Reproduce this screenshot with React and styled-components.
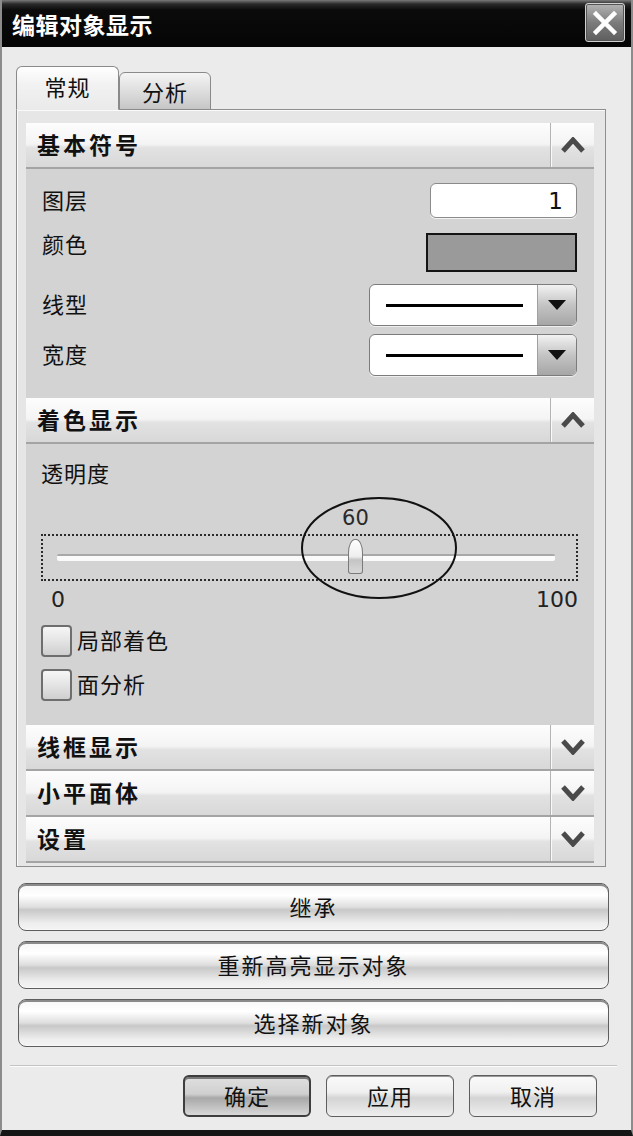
import React from 'react'
import styled, { createGlobalStyle } from 'styled-components'

const GlobalStyle = createGlobalStyle`
  html, body {
    margin: 0;
    padding: 0;
    background: #ebebeb;
  }
  body {
    font-family: "Noto Sans CJK SC", "DejaVu Sans", sans-serif;
    color: #111;
  }
`

const cjk = `"Noto Sans CJK SC", "DejaVu Sans", sans-serif`
const latin = `"DejaVu Sans", "Noto Sans CJK SC", sans-serif`

const ChevronUp = () => (
  <svg width="26" height="16" viewBox="0 0 26 16">
    <polyline points="3,14 13,3 23,14" fill="none" stroke="#4a4a4a" strokeWidth="5" strokeLinejoin="miter" />
  </svg>
)

const ChevronDown = () => (
  <svg width="26" height="16" viewBox="0 0 26 16">
    <polyline points="3,2 13,13 23,2" fill="none" stroke="#4a4a4a" strokeWidth="5" strokeLinejoin="miter" />
  </svg>
)

const DropTriangle = () => (
  <svg width="20" height="12" viewBox="0 0 20 12">
    <polygon points="1,1 19,1 10,11" fill="#111" />
  </svg>
)

const App = () => {
  const transparency = 60

  return (
    <>
      <GlobalStyle />
      <Window>
        <TitleBar>
          <Title>编辑对象显示</Title>
          <CloseButton aria-label="关闭">
            <svg width="26" height="26" viewBox="0 0 26 26">
              <path d="M4 4 L22 22 M22 4 L4 22" stroke="#fff" strokeWidth="4.5" strokeLinecap="square" />
            </svg>
          </CloseButton>
        </TitleBar>

        <Body>
          <Tabs>
            <Tab $active>常规</Tab>
            <Tab>分析</Tab>
          </Tabs>

          <Panel>
            <SectionHeader>
              <SectionTitle>基本符号</SectionTitle>
              <ArrowCell><ChevronUp /></ArrowCell>
            </SectionHeader>
            <SymbolBody>
              <FieldRow $h={35}>
                <Label>图层</Label>
                <NumberInput>1</NumberInput>
              </FieldRow>
              <FieldRow $h={39} $mt={15}>
                <Label $shift={-8}>颜色</Label>
                <Swatch />
              </FieldRow>
              <FieldRow $h={42} $mt={12}>
                <Label>线型</Label>
                <Dropdown>
                  <DropValue><LineSample /></DropValue>
                  <DropArrow><DropTriangle /></DropArrow>
                </Dropdown>
              </FieldRow>
              <FieldRow $h={42} $mt={8}>
                <Label>宽度</Label>
                <Dropdown>
                  <DropValue><LineSample /></DropValue>
                  <DropArrow><DropTriangle /></DropArrow>
                </Dropdown>
              </FieldRow>
            </SymbolBody>

            <SectionHeader>
              <SectionTitle>着色显示</SectionTitle>
              <ArrowCell><ChevronUp /></ArrowCell>
            </SectionHeader>
            <ShadeBody>
              <Label>透明度</Label>
              <SliderBox>
                <SliderValue style={{ left: `calc(16px + ${transparency / 100} * (100% - 39px))` }}>
                  {transparency}
                </SliderValue>
                <Track />
                <Thumb style={{ left: `calc(16px + ${transparency / 100} * (100% - 39px) - 7px)` }} />
                <Ellipse width="160" height="104" viewBox="0 0 160 104">
                  <ellipse cx="80" cy="52" rx="77" ry="50" fill="none" stroke="#111" strokeWidth="2" />
                </Ellipse>
              </SliderBox>
              <ScaleRow>
                <span>0</span>
                <span>100</span>
              </ScaleRow>
              <CheckRow $mt={14}>
                <CheckBox />
                <CheckLabel>局部着色</CheckLabel>
              </CheckRow>
              <CheckRow $mt={12}>
                <CheckBox />
                <CheckLabel>面分析</CheckLabel>
              </CheckRow>
            </ShadeBody>

            {['线框显示', '小平面体', '设置'].map((name) => (
              <SectionHeader key={name}>
                <SectionTitle>{name}</SectionTitle>
                <ArrowCell><ChevronDown /></ArrowCell>
              </SectionHeader>
            ))}
          </Panel>

          <ActionList>
            <WideButton>继承</WideButton>
            <WideButton>重新高亮显示对象</WideButton>
            <WideButton>选择新对象</WideButton>
          </ActionList>

          <Separator />

          <Footer>
            <FooterButton $default>确定</FooterButton>
            <FooterButton>应用</FooterButton>
            <FooterButton>取消</FooterButton>
          </Footer>
        </Body>
      </Window>
    </>
  )
}

export default App

const Window = styled.div`
  width: 633px;
  height: 1136px;
  box-sizing: border-box;
  display: flex;
  flex-direction: column;
  background: #ebebeb;
  border-left: 2px solid #8c8c8c;
  border-right: 2px solid #8c8c8c;
  border-bottom: 6px solid #151515;
  overflow: hidden;
`

const TitleBar = styled.div`
  height: 47px;
  flex: none;
  display: flex;
  align-items: center;
  justify-content: space-between;
  padding: 0 6px 0 10px;
  background: linear-gradient(#7a7a7a 0px, #2a2a2a 4px, #0b0b0b 10px, #050505 100%);
`

const Title = styled.div`
  font-family: ${cjk};
  font-weight: 700;
  font-size: 23px;
  color: #fff;
  letter-spacing: 0.5px;
`

const CloseButton = styled.div`
  width: 38px;
  height: 37px;
  margin-top: -2px;
  display: flex;
  align-items: center;
  justify-content: center;
  border: 1px solid #d0d0d0;
  border-radius: 3px;
  background: linear-gradient(#b4b4b4, #7c7c7c 50%, #5e5e5e);
  box-shadow: inset 0 0 0 1px #555;
`

const Body = styled.div`
  flex: 1;
  display: flex;
  flex-direction: column;
  padding: 19px 25px 0 14px;
`

const Tabs = styled.div`
  display: flex;
  align-items: flex-end;
  height: 44px;
  margin-bottom: -1px;
  position: relative;
  z-index: 1;
`

const Tab = styled.div`
  box-sizing: border-box;
  width: ${(p) => (p.$active ? '103px' : '92px')};
  height: ${(p) => (p.$active ? '44px' : '38px')};
  display: flex;
  align-items: center;
  justify-content: center;
  padding-bottom: ${(p) => (p.$active ? '4px' : '0')};
  font-family: ${cjk};
  font-size: 22px;
  letter-spacing: 1px;
  color: #111;
  border: 1px solid #8a8a8a;
  border-bottom: ${(p) => (p.$active ? '1px solid #eaeaea' : '1px solid #8a8a8a')};
  border-radius: 6px 6px 0 0;
  background: ${(p) =>
    p.$active
      ? 'linear-gradient(#ffffff, #f2f2f2 40%, #eaeaea)'
      : 'linear-gradient(#f4f4f4, #dedede 50%, #c6c6c6)'};
`

const Panel = styled.div`
  box-sizing: border-box;
  width: 590px;
  display: flex;
  flex-direction: column;
  padding: 13px 11px 3px 9px;
  border: 1px solid #8e8e8e;
  box-shadow: inset 1px 1px 0 #fafafa;
  background: #e6e6e6;
`

const SectionHeader = styled.div`
  height: 44px;
  display: flex;
  align-items: stretch;
  border-bottom: 2px solid #a4a4a4;
  background: linear-gradient(#fdfdfd, #f4f4f4 48%, #e2e2e2 56%, #d8d8d8);
`

const SectionTitle = styled.div`
  flex: 1;
  display: flex;
  align-items: center;
  padding: 0 0 3px 11px;
  font-family: ${cjk};
  font-weight: 700;
  font-size: 23px;
  letter-spacing: 3px;
  color: #111;
`

const ArrowCell = styled.div`
  width: 43px;
  display: flex;
  align-items: center;
  justify-content: center;
  border-left: 1px solid #b4b4b4;
  box-shadow: inset 1px 0 0 #fafafa;
`

const SymbolBody = styled.div`
  height: 229px;
  box-sizing: border-box;
  padding: 14px 17px 0 16px;
  background: #d3d3d3;
  display: flex;
  flex-direction: column;
`

const FieldRow = styled.div`
  height: ${(p) => p.$h}px;
  margin-top: ${(p) => p.$mt || 0}px;
  display: flex;
  align-items: center;
  justify-content: space-between;
`

const Label = styled.div`
  font-family: ${cjk};
  font-size: 22px;
  letter-spacing: 1px;
  color: #111;
  line-height: 24px;
  transform: translateY(${(p) => (p.$shift || 0) - 2}px);
`

const NumberInput = styled.div`
  box-sizing: border-box;
  width: 147px;
  height: 35px;
  display: flex;
  align-items: center;
  justify-content: flex-end;
  padding-right: 13px;
  font-family: ${latin};
  font-size: 23px;
  color: #111;
  background: #fff;
  border: 1px solid #8a8a8a;
  border-radius: 6px;
  box-shadow: 0 1px 0 #f4f4f4;
`

const Swatch = styled.div`
  box-sizing: border-box;
  width: 151px;
  height: 39px;
  background: #9a9a9a;
  border: 2px solid #141414;
`

const Dropdown = styled.div`
  box-sizing: border-box;
  width: 208px;
  height: 42px;
  display: flex;
  border: 1px solid #7c7c7c;
  border-radius: 6px;
  background: #fff;
  overflow: hidden;
  box-shadow: 0 1px 0 #efefef;
`

const DropValue = styled.div`
  flex: 1;
  display: flex;
  align-items: center;
  padding: 0 14px 0 16px;
`

const LineSample = styled.div`
  width: 100%;
  height: 3px;
  background: #000;
`

const DropArrow = styled.div`
  width: 38px;
  display: flex;
  align-items: center;
  justify-content: center;
  border-left: 1px solid #a0a0a0;
  background: linear-gradient(#f2f2f2, #c4c4c4 50%, #a6a6a6);
`

const ShadeBody = styled.div`
  height: 281px;
  box-sizing: border-box;
  padding: 18px 16px 0 15px;
  background: #d3d3d3;
  display: flex;
  flex-direction: column;
`

const SliderBox = styled.div`
  position: relative;
  box-sizing: border-box;
  height: 47px;
  margin-top: 48px;
  width: 537px;
  border: 2px dotted #2a2a2a;
  display: flex;
  align-items: center;
`

const SliderValue = styled.div`
  position: absolute;
  top: -30px;
  transform: translateX(-50%);
  font-family: ${latin};
  font-size: 21px;
  color: #2a2a2a;
`

const Track = styled.div`
  margin: 0 21px 0 14px;
  flex: 1;
  height: 5px;
  border-top: 2px solid #a8a8a8;
  background: #fafafa;
  border-radius: 2px;
`

const Thumb = styled.div`
  position: absolute;
  top: 3px;
  width: 15px;
  height: 35px;
  box-sizing: border-box;
  border: 1px solid #7a7a7a;
  border-radius: 7px 7px 3px 3px / 14px 14px 3px 3px;
  background: linear-gradient(#ffffff, #eeeeee 50%, #c4c4c4 60%, #d8d8d8);
`

const Ellipse = styled.svg`
  position: absolute;
  left: 256px;
  top: -40px;
  pointer-events: none;
`

const ScaleRow = styled.div`
  width: 537px;
  margin-top: 7px;
  height: 23px;
  display: flex;
  justify-content: space-between;
  align-items: center;
  box-sizing: border-box;
  padding-left: 10px;
  font-family: ${latin};
  font-size: 22px;
  color: #222;
`

const CheckRow = styled.div`
  margin-top: ${(p) => p.$mt}px;
  display: flex;
  align-items: center;
  gap: 5px;
`

const CheckBox = styled.div`
  box-sizing: border-box;
  width: 31px;
  height: 32px;
  border: 2px solid #6e6e6e;
  border-radius: 4px;
  background: linear-gradient(#f6f6f6, #e4e4e4 50%, #cfcfcf);
`

const CheckLabel = styled.div`
  font-family: ${cjk};
  font-size: 22px;
  letter-spacing: 1px;
  color: #111;
  transform: translateY(-2px);
`

const ActionList = styled.div`
  margin: 16px -3px 0 2px;
  display: flex;
  flex-direction: column;
  gap: 10px;
`

const WideButton = styled.div`
  height: 48px;
  box-sizing: border-box;
  display: flex;
  align-items: center;
  justify-content: center;
  padding-bottom: 3px;
  font-family: ${cjk};
  font-size: 22px;
  letter-spacing: 2px;
  color: #111;
  border: 1px solid #5e5e5e;
  border-radius: 8px;
  box-shadow: inset 0 2px 0 #8a8a8a, inset 0 -1px 0 #f8f8f8;
  background: linear-gradient(#f6f6f6, #ffffff 25%, #dedede 50%, #c8c8c8 56%, #eeeeee 85%, #f4f4f4);
`

const Separator = styled.div`
  margin: 18px -11px 0 -6px;
  height: 1px;
  background: #c4c4c4;
  border-bottom: 1px solid #fbfbfb;
`

const Footer = styled.div`
  display: flex;
  justify-content: flex-end;
  gap: 15px;
  padding: 8px 9px 0 0;
`

const FooterButton = styled.div`
  width: 128px;
  height: 42px;
  box-sizing: border-box;
  display: flex;
  align-items: center;
  justify-content: center;
  padding-bottom: 2px;
  font-family: ${cjk};
  font-size: 22px;
  letter-spacing: 1px;
  color: #111;
  border: ${(p) => (p.$default ? '2px solid #3e3e3e' : '1px solid #5e5e5e')};
  border-radius: 6px;
  box-shadow: ${(p) => (p.$default ? 'inset 0 2px 0 #777' : 'inset 0 1px 0 #9a9a9a')};
  background: ${(p) =>
    p.$default
      ? 'linear-gradient(#e0e0e0, #cfcfcf 45%, #a8a8a8 55%, #d8d8d8)'
      : 'linear-gradient(#fafafa, #f0f0f0 40%, #d4d4d4 55%, #efefef)'};
`
